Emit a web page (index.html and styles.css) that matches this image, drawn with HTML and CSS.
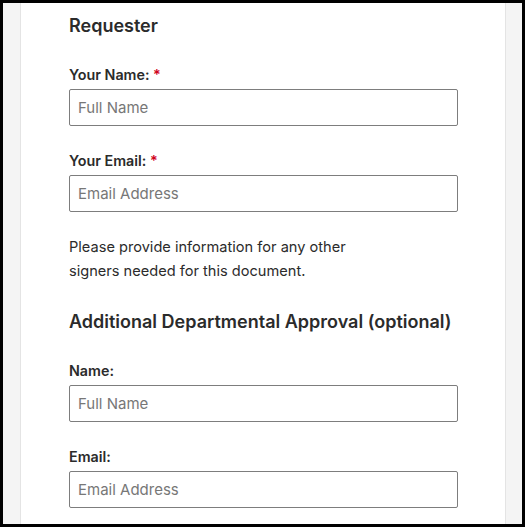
FILE: index.html
```html
<!DOCTYPE html>
<html lang="en">
<head>
    <meta charset="UTF-8">
    <meta name="viewport" content="width=device-width, initial-scale=1.0">
    <title>Signer Request</title>
    <link rel="stylesheet" href="styles.css">
</head>
<body>
    <div class="frame">
        <div class="card">
            <h2 class="section-title first">Requester</h2>

            <div class="field">
                <label for="reqName">Your Name: <span class="required">*</span></label>
                <input type="text" id="reqName" placeholder="Full Name">
            </div>

            <div class="field">
                <label for="reqEmail">Your Email: <span class="required">*</span></label>
                <input type="email" id="reqEmail" placeholder="Email Address">
            </div>

            <p class="note">Please provide information for any other<br>signers needed for this document.</p>

            <h2 class="section-title">Additional Departmental Approval (optional)</h2>

            <div class="field">
                <label for="deptName">Name:</label>
                <input type="text" id="deptName" placeholder="Full Name">
            </div>

            <div class="field">
                <label for="deptEmail">Email:</label>
                <input type="email" id="deptEmail" placeholder="Email Address">
            </div>
        </div>
    </div>
</body>
</html>
```

FILE: styles.css
```css
body {
    margin: 0;
    font-family: Inter, "Open Sans", Arial, sans-serif;
    color: #2b2b2b;
}
.frame {
    height: 527px;
    box-sizing: border-box;
    border: 3px solid #000;
    background-color: #f4f4f4;
    padding: 0 16px 0 17px;
    overflow: hidden;
}
.card {
    height: 100%;
    box-sizing: border-box;
    background: white;
    border-left: 1px solid #e4e4e4;
    border-right: 1px solid #e4e4e4;
    padding: 0 47px 0 48px;
}
.section-title {
    font-size: 18px;
    line-height: 24px;
    font-weight: 600;
    margin: 0;
}
.section-title.first {
    padding-top: 11px;
}
.field {
    margin-top: 30px;
}
.field + .field {
    margin-top: 26px;
}
label {
    display: block;
    font-size: 14.3px;
    line-height: 18px;
    font-weight: 600;
    margin-bottom: 5px;
}
.required {
    color: #d0021b;
}
input {
    display: block;
    width: 100%;
    height: 37px;
    box-sizing: border-box;
    border: 1px solid #7d7d7d;
    border-radius: 2px;
    padding: 0 8px;
    font-family: inherit;
    font-size: 15px;
    color: #333;
}
input::placeholder {
    color: #777;
}
.note {
    font-size: 14.6px;
    line-height: 24px;
    margin: 23px 0 0;
}
.note + .section-title {
    margin-top: 27px;
}
.section-title + .field {
    margin-top: 28px;
}
```
